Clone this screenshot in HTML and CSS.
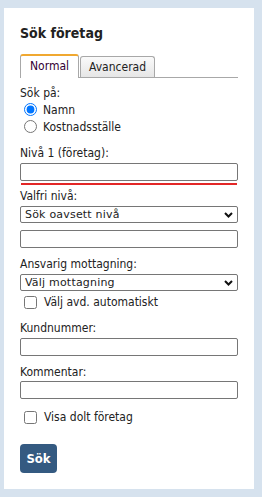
FILE: index.html
```html
<!DOCTYPE html>
<html lang="sv">
<head>
    <meta charset="utf-8"/>
    <meta name="viewport" content="width=device-width, initial-scale=1.0"/>
    <title>Sök företag</title>
    <link rel="stylesheet" href="styles.css">
</head>
<body>
<div class="panel">
    <h2 class="title">Sök företag</h2>

    <div class="tabs">
        <div class="tab active">Normal</div>
        <div class="tab">Avancerad</div>
    </div>

    <div class="label first">Sök på:</div>
    <label class="option"><input type="radio" name="sokpa" checked> Namn</label>
    <label class="option"><input type="radio" name="sokpa"> Kostnadsställe</label>

    <label class="label gap-lg" for="niva1">Nivå 1 (företag):</label>
    <input type="text" id="niva1" class="text">
    <div class="error-line"></div>

    <label class="label gap-xs" for="valfri">Valfri nivå:</label>
    <div class="select-wrap">
        <select id="valfri" class="select">
            <option>Sök oavsett nivå</option>
        </select>
        <svg class="chevron" width="9" height="6" viewBox="0 0 9 6"><path d="M1 1 L4.5 4.5 L8 1" fill="none" stroke="#111" stroke-width="2"/></svg>
    </div>
    <input type="text" class="text gap-sm">

    <label class="label gap-md" for="mottagning">Ansvarig mottagning:</label>
    <div class="select-wrap">
        <select id="mottagning" class="select">
            <option>Välj mottagning</option>
        </select>
        <svg class="chevron" width="9" height="6" viewBox="0 0 9 6"><path d="M1 1 L4.5 4.5 L8 1" fill="none" stroke="#111" stroke-width="2"/></svg>
    </div>
    <label class="option check gap-xs"><input type="checkbox"> Välj avd. automatiskt</label>

    <label class="label gap-lg" for="kundnr">Kundnummer:</label>
    <input type="text" id="kundnr" class="text">

    <label class="label gap-md" for="kommentar">Kommentar:</label>
    <input type="text" id="kommentar" class="text tight">

    <label class="option check gap-lg"><input type="checkbox"> Visa dolt företag</label>

    <button class="btn">Sök</button>
</div>
</body>
</html>
```

FILE: styles.css
```css
body {
    margin: 0;
    padding: 8px 8px 8px 4px;
    background-color: #d6e2ee;
    font-family: "DejaVu Sans Condensed", "DejaVu Sans", sans-serif;
    font-size: 12px;
    color: #222;
}

.panel {
    width: 218px;
    padding: 15px 16px 16px 16px;
    background-color: white;
}

.title {
    margin: 0;
    font-size: 14px;
    line-height: 20px;
    font-weight: bold;
    color: #222;
}

.tabs {
    display: flex;
    align-items: flex-end;
    margin-top: 11px;
    padding-left: 0;
    border-bottom: 1px solid #a8a8a8;
}

.tab {
    height: 20px;
    line-height: 20px;
    padding: 0 8px;
    border: 1px solid #a8a8a8;
    border-bottom: none;
    border-radius: 3px 3px 0 0;
    background: linear-gradient(#fafafa, #e6e6e6);
    color: #222;
    margin-left: 1px;
    font-size: 12px;
}

.tab.active {
    height: 21px;
    margin-left: 0;
    margin-bottom: -1px;
    padding: 0 9px 1px 9px;
    border-top: 2px solid #f0a830;
    background: white;
    color: #303;
}

.label {
    display: block;
    line-height: 16px;
    margin-bottom: 2px;
}

.label.first {
    margin-top: 7px;
    margin-bottom: 0;
}

.option {
    display: flex;
    align-items: center;
    height: 17px;
    line-height: 16px;
}

.option input {
    width: 13px;
    height: 13px;
    margin: 0 6px 0 4px;
}

.option.check {
    height: 16px;
}

.option.check input {
    margin-right: 7px;
}

.text {
    display: block;
    box-sizing: border-box;
    width: 218px;
    height: 18px;
    margin: 0;
    border: 1px solid #767676;
    border-radius: 2px;
    font: inherit;
}

.text.tight {
    margin-top: -1px;
}

.error-line {
    height: 2px;
    margin: 2px 1px 0 1px;
    background-color: #e32626;
}

.select-wrap {
    position: relative;
    width: 218px;
}

.select {
    display: block;
    box-sizing: border-box;
    width: 218px;
    height: 17px;
    margin: 0;
    padding: 0 0 0 4px;
    border: 1px solid #767676;
    border-radius: 2px;
    background-color: white;
    font-family: "DejaVu Sans", sans-serif;
    font-size: 11px;
    letter-spacing: 0.2px;
    color: #222;
    appearance: none;
    -webkit-appearance: none;
}

.chevron {
    position: absolute;
    right: 5px;
    top: 6px;
    pointer-events: none;
}

.gap-xs { margin-top: 3px; }
.gap-sm { margin-top: 7px; }
.gap-md { margin-top: 8px; }
.gap-lg { margin-top: 10px; }

.btn {
    display: block;
    margin-top: 19px;
    width: 37px;
    height: 29px;
    padding: 0;
    border: none;
    border-radius: 4px;
    background-color: #345a81;
    color: white;
    font: inherit;
    font-weight: bold;
    font-size: 13px;
}
```
